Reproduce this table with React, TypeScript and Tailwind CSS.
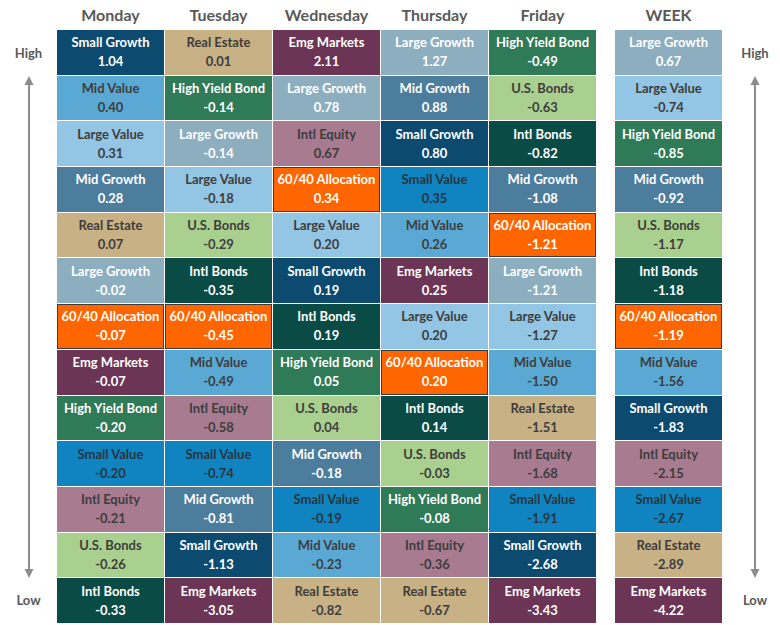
import React from "react";

type Cell = [string, string];

const STYLE: Record<string, string> = {
  "Small Growth": "bg-[#0c4b6f] text-white",
  "Real Estate": "bg-[#c8b185] text-[#3d3d3d]",
  "Emg Markets": "bg-[#6c3556] text-white",
  "Large Growth": "bg-[#8caebf] text-white",
  "High Yield Bond": "bg-[#2f7a57] text-white",
  "Mid Value": "bg-[#5aa9d5] text-[#3d3d3d]",
  "U.S. Bonds": "bg-[#a9d08e] text-[#3d3d3d]",
  "Large Value": "bg-[#93c5e4] text-[#3d3d3d]",
  "Intl Equity": "bg-[#a87b90] text-[#3d3d3d]",
  "Intl Bonds": "bg-[#0b4b45] text-white",
  "Small Value": "bg-[#0f84c0] text-[#263640]",
  "Mid Growth": "bg-[#4d7d9c] text-white",
  "60/40 Allocation": "bg-[#ff6600] text-white border border-[#3b3b3b]",
};

const DAYS: { name: string; cells: Cell[] }[] = [
  {
    name: "Monday",
    cells: [
      ["Small Growth", "1.04"], ["Mid Value", "0.40"], ["Large Value", "0.31"], ["Mid Growth", "0.28"],
      ["Real Estate", "0.07"], ["Large Growth", "-0.02"], ["60/40 Allocation", "-0.07"], ["Emg Markets", "-0.07"],
      ["High Yield Bond", "-0.20"], ["Small Value", "-0.20"], ["Intl Equity", "-0.21"], ["U.S. Bonds", "-0.26"],
      ["Intl Bonds", "-0.33"],
    ],
  },
  {
    name: "Tuesday",
    cells: [
      ["Real Estate", "0.01"], ["High Yield Bond", "-0.14"], ["Large Growth", "-0.14"], ["Large Value", "-0.18"],
      ["U.S. Bonds", "-0.29"], ["Intl Bonds", "-0.35"], ["60/40 Allocation", "-0.45"], ["Mid Value", "-0.49"],
      ["Intl Equity", "-0.58"], ["Small Value", "-0.74"], ["Mid Growth", "-0.81"], ["Small Growth", "-1.13"],
      ["Emg Markets", "-3.05"],
    ],
  },
  {
    name: "Wednesday",
    cells: [
      ["Emg Markets", "2.11"], ["Large Growth", "0.78"], ["Intl Equity", "0.67"], ["60/40 Allocation", "0.34"],
      ["Large Value", "0.20"], ["Small Growth", "0.19"], ["Intl Bonds", "0.19"], ["High Yield Bond", "0.05"],
      ["U.S. Bonds", "0.04"], ["Mid Growth", "-0.18"], ["Small Value", "-0.19"], ["Mid Value", "-0.23"],
      ["Real Estate", "-0.82"],
    ],
  },
  {
    name: "Thursday",
    cells: [
      ["Large Growth", "1.27"], ["Mid Growth", "0.88"], ["Small Growth", "0.80"], ["Small Value", "0.35"],
      ["Mid Value", "0.26"], ["Emg Markets", "0.25"], ["Large Value", "0.20"], ["60/40 Allocation", "0.20"],
      ["Intl Bonds", "0.14"], ["U.S. Bonds", "-0.03"], ["High Yield Bond", "-0.08"], ["Intl Equity", "-0.36"],
      ["Real Estate", "-0.67"],
    ],
  },
  {
    name: "Friday",
    cells: [
      ["High Yield Bond", "-0.49"], ["U.S. Bonds", "-0.63"], ["Intl Bonds", "-0.82"], ["Mid Growth", "-1.08"],
      ["60/40 Allocation", "-1.21"], ["Large Growth", "-1.21"], ["Large Value", "-1.27"], ["Mid Value", "-1.50"],
      ["Real Estate", "-1.51"], ["Intl Equity", "-1.68"], ["Small Value", "-1.91"], ["Small Growth", "-2.68"],
      ["Emg Markets", "-3.43"],
    ],
  },
];

const WEEK: Cell[] = [
  ["Large Growth", "0.67"], ["Large Value", "-0.74"], ["High Yield Bond", "-0.85"], ["Mid Growth", "-0.92"],
  ["U.S. Bonds", "-1.17"], ["Intl Bonds", "-1.18"], ["60/40 Allocation", "-1.19"], ["Mid Value", "-1.56"],
  ["Small Growth", "-1.83"], ["Intl Equity", "-2.15"], ["Small Value", "-2.67"], ["Real Estate", "-2.89"],
  ["Emg Markets", "-4.22"],
];

function Column({ name, cells }: { name: string; cells: Cell[] }) {
  return (
    <div className="flex w-[107px] flex-col">
      <div className="flex h-[30px] items-center justify-center text-[16px] font-bold text-[#595959]">{name}</div>
      <div className="grid h-[593px] grid-rows-[repeat(13,minmax(0,1fr))] gap-px">
        {cells.map(([label, value], i) => (
          <div key={i} className={`flex flex-col items-center justify-center text-[13px] font-bold leading-[19px] ${STYLE[label]}`}>
            <span>{label}</span>
            <span>{value}</span>
          </div>
        ))}
      </div>
    </div>
  );
}

// High / Low labels with the double arrow between them
function Gutter() {
  return (
    <div className="flex flex-col items-center pt-[30px] text-[13px] font-bold text-[#595959]">
      <div className="flex h-[46px] items-center pt-[2px]">High</div>
      <svg width="12" height="502" viewBox="0 0 12 502">
        <line x1="6" y1="6" x2="6" y2="496" stroke="#8c8c8c" strokeWidth="2" />
        <polygon points="6,0 1.5,9 10.5,9" fill="#8c8c8c" />
        <polygon points="6,502 1.5,493 10.5,493" fill="#8c8c8c" />
      </svg>
      <div className="flex h-[46px] items-center">Low</div>
    </div>
  );
}

export default function App() {
  return (
    <div className="flex h-[625px] w-[780px] bg-white font-['Lato',sans-serif]">
      <div className="w-[57px]">
        <Gutter />
      </div>
      <div className="flex gap-px">
        {DAYS.map((d) => (
          <Column key={d.name} name={d.name} cells={d.cells} />
        ))}
      </div>
      <div className="w-[19px]" />
      <Column name="WEEK" cells={WEEK} />
      <div className="w-[58px] pl-[8px]">
        <Gutter />
      </div>
    </div>
  );
}
